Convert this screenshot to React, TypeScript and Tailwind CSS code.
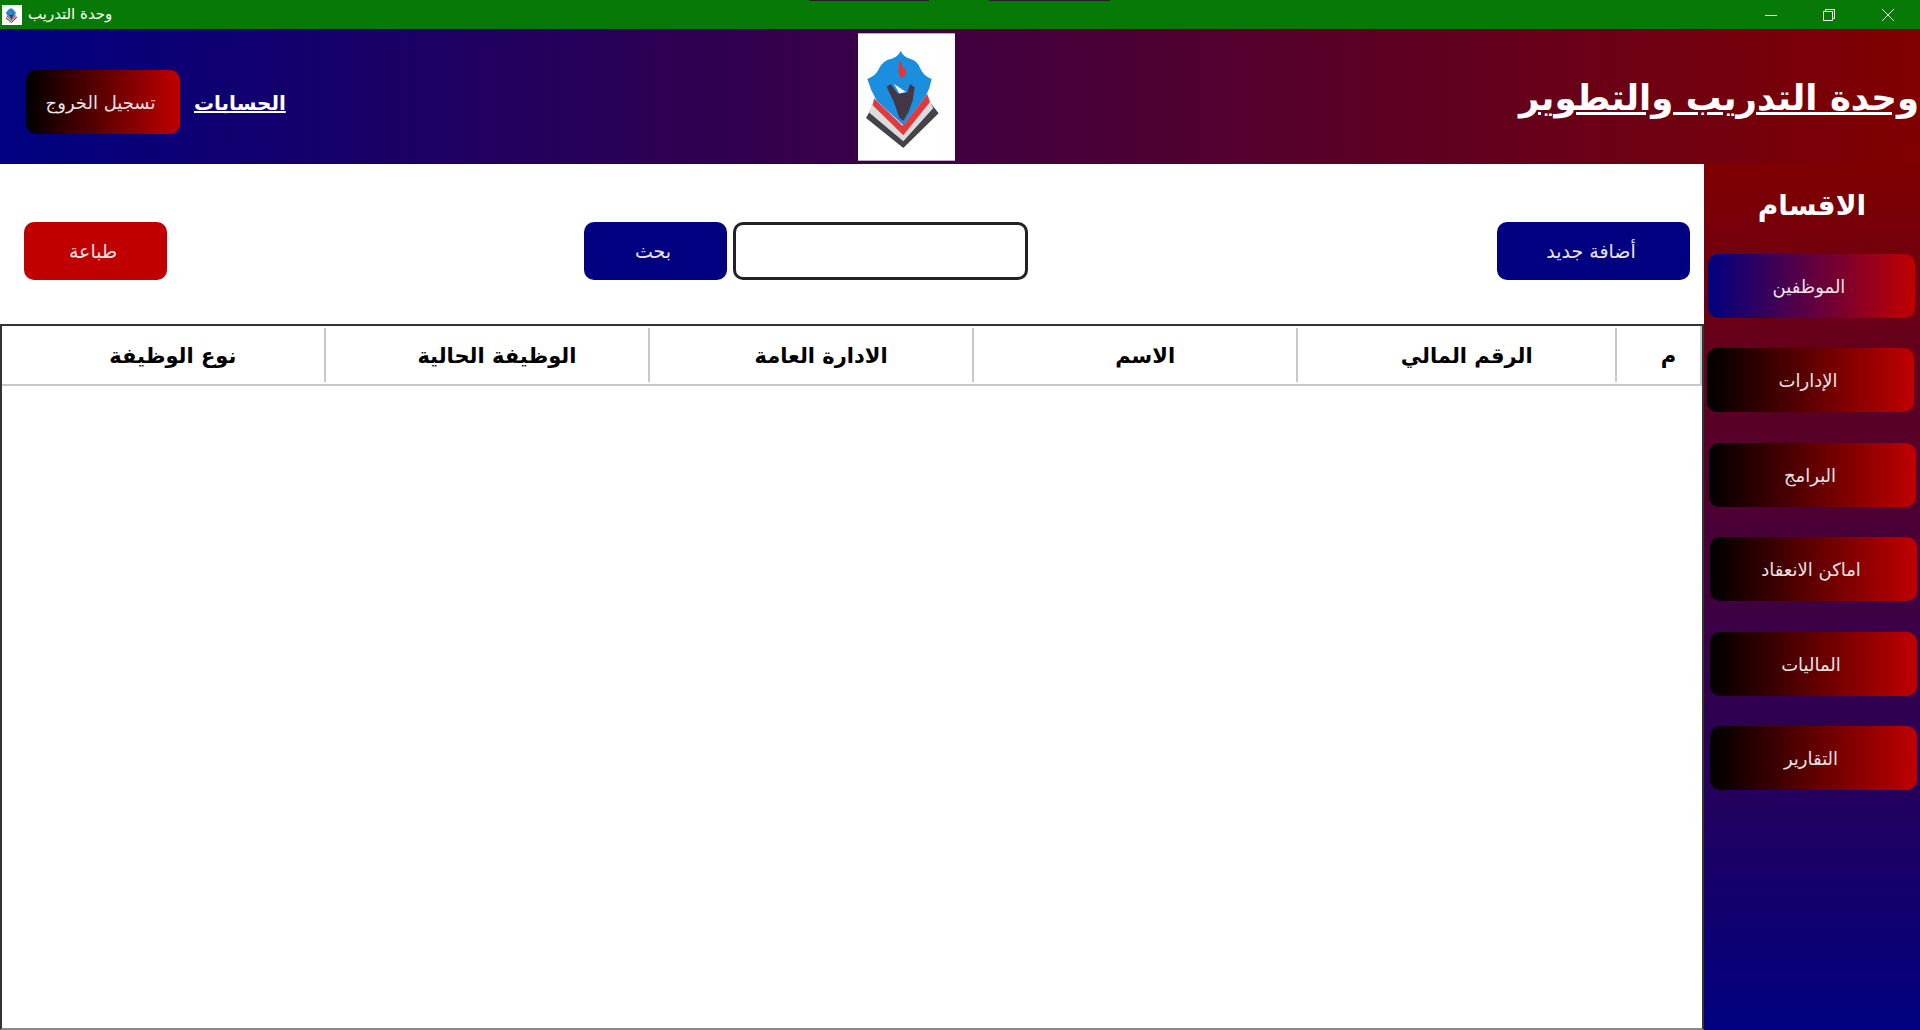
import { ReactNode } from "react";

const sections = [
  { label: "الموظفين", cls: "mt-[24px] ml-[4px] from-[#000080]" },
  { label: "الإدارات", cls: "mt-[30px] ml-[3px] from-black" },
  { label: "البرامج", cls: "mt-[31px] ml-[5px] from-black" },
  { label: "اماكن الانعقاد", cls: "mt-[30px] ml-[6px] from-black" },
  { label: "الماليات", cls: "mt-[31px] ml-[6px] from-black" },
  { label: "التقارير", cls: "mt-[30px] ml-[6px] from-black" },
];

const columns = ["نوع الوظيفة", "الوظيفة الحالية", "الادارة العامة", "الاسم", "الرقم المالي", "م"];
const columnWidths = ["w-[324px]", "w-[325px]", "w-[324px]", "w-[325px]", "w-[319px]", "w-[83px]"];

function Logo({ className }: { className?: string }) {
  return (
    <svg viewBox="24 8 291 382" className={className}>
      <rect x="24" y="8" width="291" height="382" fill="#fff" />
      <g className="blur-[0.5px]">
        <path d="M48 262 L70 222 L160 310 L240 215 L266 248 L160 352 Z" fill="#45434a" />
        <path d="M66 218 L160 300 L236 205 L250 232 L160 332 L58 246 Z" fill="#dcdcde" />
        <path d="M72 203 L158 285 L232 190 L240 214 L160 314 L68 224 Z" fill="#e03a3c" />
        <path d="M152 60 Q160 78 180 84 Q205 92 210 112 Q222 138 245 145 Q240 172 228 195 L160 284 L80 210 Q62 180 52 145 Q78 135 88 112 Q100 88 125 84 Q144 78 152 60 Z" fill="#1b8ee0" />
        <path d="M150 88 C145 105 143 120 150 140 L162 140 C172 122 168 110 158 110 C156 102 154 95 150 88 Z" fill="#d8393a" />
        <path d="M110 168 L122 160 L135 178 L145 190 L172 185 L180 160 L194 170 L188 210 L175 245 L160 270 L148 262 L132 215 Z" fill="#453645" />
        <path d="M132 160 L168 184 L148 188 Z" fill="#ffffff" />
      </g>
    </svg>
  );
}

function GradientButton({ children, className }: { children: ReactNode; className: string }) {
  return (
    <button className={`h-[64px] rounded-[10px] bg-linear-to-r/srgb to-[#c00000] pt-[1px] pr-[5px] text-[18px] text-[#e9e4e6] ${className}`}>
      {children}
    </button>
  );
}

export default function App() {
  return (
    <div className="relative h-[1030px] w-[1920px] overflow-hidden bg-white font-['DejaVu_Sans',sans-serif]">
      {/* window title bar */}
      <div className="relative flex h-[29px] items-center bg-[#067906] text-white">
        <div className="absolute top-0 left-[809px] h-px w-[120px] bg-[#222]" />
        <div className="absolute top-0 left-[989px] h-px w-[121px] bg-[#222]" />
        <div className="ml-[2px] flex h-[20px] w-[20px] justify-center bg-white">
          <Logo className="h-[20px] w-[16px]" />
        </div>
        <span className="ml-[6px] text-[15px]">وحدة التدريب</span>
        <div className="ml-auto flex items-center">
          <svg viewBox="0 0 12 12" className="mr-[46px] h-[12px] w-[12px]" fill="none" stroke="#fff">
            <path d="M0 6.5h12" />
          </svg>
          <svg viewBox="0 0 12 12" className="mr-[47px] h-[12px] w-[12px]" fill="none" stroke="#fff">
            <path d="M.5 2.5h9v9h-9zM2.5 2.5v-2h9v9h-2" />
          </svg>
          <svg viewBox="0 0 12 12" className="mr-[26px] h-[12px] w-[12px]" fill="none" stroke="#fff">
            <path d="M0 0l12 12M12 0L0 12" />
          </svg>
        </div>
      </div>

      {/* header */}
      <header className="flex h-[135px] items-center bg-linear-to-r/srgb from-[#000080] to-[#800000]">
        <div className="mt-[11px] flex w-[858px] items-center pl-[26px]">
          <GradientButton className="w-[154px] from-black">تسجيل الخروج</GradientButton>
          <a className="mt-[1px] ml-[14px] text-[20px] font-bold text-white underline">الحسابات</a>
        </div>
        <Logo className="h-[128px] w-[97px]" />
        <div className="flex flex-1 justify-end pt-[3px] pr-[1px]">
          <h1 className="text-[35.5px] font-bold text-white underline">وحدة التدريب والتطوير</h1>
        </div>
      </header>

      <div className="flex h-[866px]">
        {/* main */}
        <main className="flex w-[1704px] flex-col">
          <div className="flex h-[160px] items-start pt-[58px] text-[19px] text-[#e9e4e6]">
            <button className="ml-[24px] h-[58px] w-[143px] rounded-[10px] bg-[#c00000] pr-[5px]">طباعة</button>
            <button className="ml-[417px] h-[58px] w-[143px] rounded-[10px] bg-[#000080] pr-[5px]">بحث</button>
            <input className="ml-[6px] h-[58px] w-[295px] rounded-[10px] border-[3px] border-[#222] bg-white outline-none" />
            <button className="ml-[469px] h-[58px] w-[193px] rounded-[10px] bg-[#000080] pr-[5px]">أضافة جديد</button>
          </div>
          <div className="flex-1 border-x-2 border-t-2 border-b-2 border-x-[#333] border-t-[#333] border-b-[#888]">
            <div className="flex h-[60px] items-center border-r-2 border-b-2 border-[#c8c8c8] text-[21px] font-bold text-black">
              {columns.map((c, i) => (
                <div
                  key={c}
                  className={`flex h-[54px] items-center justify-center pt-[4px] pl-[20px] ${columnWidths[i]} ${i < 5 ? "border-r-2 border-[#c8c8c8]" : ""}`}
                >
                  {c}
                </div>
              ))}
            </div>
          </div>
        </main>

        {/* sections sidebar */}
        <aside className="flex w-[216px] flex-col items-start bg-linear-to-b/srgb from-[#800000] to-[#000080]">
          <h2 className="mt-[18px] w-full text-center text-[28px] leading-[48px] font-bold text-white">الاقسام</h2>
          {sections.map((s) => (
            <GradientButton key={s.label} className={`w-[207px] ${s.cls}`}>
              {s.label}
            </GradientButton>
          ))}
        </aside>
      </div>
    </div>
  );
}
